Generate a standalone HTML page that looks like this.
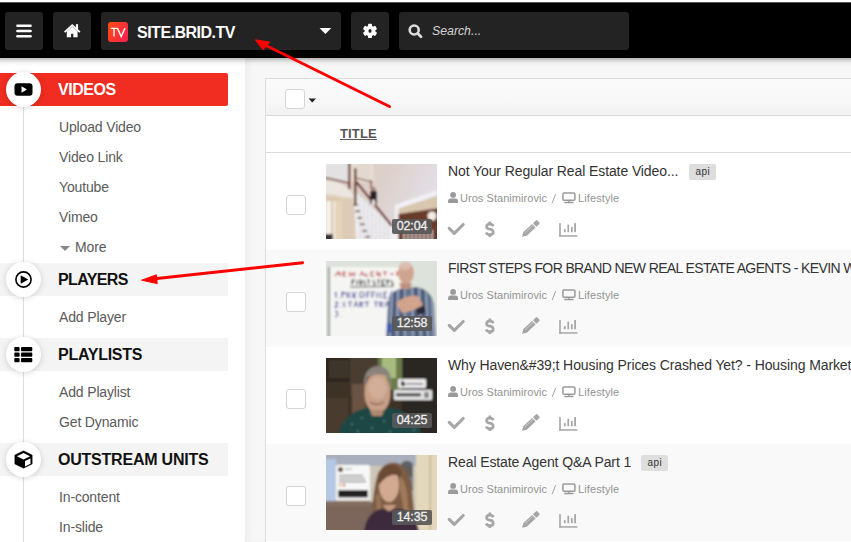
<!DOCTYPE html>
<html><head><meta charset="utf-8">
<style>
*{box-sizing:border-box;margin:0;padding:0}
html,body{width:851px;height:542px;overflow:hidden;background:#fff;font-family:"Liberation Sans",sans-serif}
#hdr{position:absolute;left:-10px;top:2px;width:871px;height:56px;background:#000;z-index:2;box-shadow:0 1px 6px rgba(0,0,0,.42)}
#hdrtop{position:absolute;left:0;top:2px;width:851px;height:1px;background:rgba(255,255,255,.35);z-index:3}
.btn{z-index:3}
#hicons,#htxt1,#htxt2{z-index:3}
.btn{position:absolute;top:12px;height:38px;background:#232323;border-radius:3px}
#side{position:absolute;left:0;top:58px;width:245px;height:484px;background:#fff;overflow:hidden}
#main{position:absolute;left:245px;top:58px;width:606px;height:484px;background:#f7f7f7;overflow:hidden}
.vline{position:absolute;left:23px;width:1px;background:#dedede}
.sec{position:absolute;left:0;width:228px;height:33px;background:#f4f4f4}
.sec .t{position:absolute;left:58px;top:0;line-height:33px;font-weight:bold;font-size:16px;color:#111;white-space:nowrap}
.circ{position:absolute;left:6px;width:35px;height:35px;border-radius:50%;background:#fff;box-shadow:0 1px 6px rgba(0,0,0,.16)}
.circ svg{position:absolute;left:0;top:0}
.sub{position:absolute;left:59px;margin-top:1px;font-size:14px;letter-spacing:-0.15px;color:#5a5a5a;line-height:16px;white-space:nowrap}
#panel{position:absolute;left:20px;top:20px;width:620px;height:480px;border:1px solid #dcdcdc;background:#fff}
.row{position:absolute;left:0;width:620px;height:97px;background:#fff}
.row.g{background:#f9f9f9}
.cb{position:absolute;width:20px;height:20px;border:1px solid #d4d4d4;border-radius:3px;background:#fff}
.thumb{position:absolute;left:60px;top:11px;width:111px;height:75px;overflow:hidden}
.thumb svg{display:block}
.dur{position:absolute;left:66px;top:54.5px;width:40px;height:15.5px;background:rgba(88,88,88,.92);color:#eee;font-size:12.5px;-webkit-text-stroke:0.3px #eee;letter-spacing:-0.2px;text-align:center;line-height:15.5px;border-radius:2px}
.title{position:absolute;left:182px;top:10px;font-size:14px;letter-spacing:-0.1px;color:#333;white-space:nowrap;line-height:16px}
.api{position:absolute;top:11px;width:26.8px;height:15.5px;background:#dedede;color:#333;font-size:10px;text-align:center;line-height:15.5px;border-radius:2px;letter-spacing:0.5px;text-indent:0.5px}
.meta{position:absolute;top:39px;font-size:11px;color:#939393;white-space:nowrap;line-height:13px}
.acts{position:absolute;left:0;top:0}
</style></head><body>
<div id="hdr"></div><div id="hdrtop"></div><div style="position:absolute;left:0;top:0;width:851px;height:2px;background:#fff;z-index:4"></div>
<div class="btn" style="left:5px;width:38px"></div>
<div class="btn" style="left:53px;width:38px"></div>
<div class="btn" style="left:101px;width:240px"></div>
<div class="btn" style="left:351px;width:38px"></div>
<div class="btn" style="left:399px;width:230px"></div>
<!-- header icons -->
<svg id="hicons" style="position:absolute;left:0;top:0" width="851" height="58">
  <g stroke="#fff" stroke-width="2.6" stroke-linecap="round">
    <line x1="17.5" y1="25.8" x2="30.5" y2="25.8"/>
    <line x1="17.5" y1="31" x2="30.5" y2="31"/>
    <line x1="17.5" y1="36.2" x2="30.5" y2="36.2"/>
  </g>
  <!-- home -->
  <path d="M64 31.5 L72.2 24 L80.5 31.5 L79.3 32.8 L72.2 26.5 L65.2 32.8 Z" fill="#fff"/>
  <path d="M66.8 31.3 L72.2 26.8 L77.6 31.3 L77.6 37.3 L73.3 37.3 L73.3 33.8 L71.1 33.8 L71.1 37.3 L66.8 37.3 Z" fill="#fff"/>
  <rect x="75.9" y="24.2" width="2.2" height="5" fill="#fff"/>
  <!-- TV logo -->
  <defs><linearGradient id="tvg" x1="0" y1="0.2" x2="1" y2="0.8"><stop offset="0" stop-color="#ff4a12"/><stop offset="1" stop-color="#fa2050"/></linearGradient></defs>
  <rect x="108" y="22" width="20" height="20" rx="3" fill="url(#tvg)"/>
  <path d="M110.7 28.4 H117.4 M114.05 28.4 V36.6 M117.4 28.1 L121.2 36.5 L125 28.1" stroke="#fff" stroke-width="1.4" fill="none"/>
  <!-- caret -->
  <path d="M319.5 28 L331.3 28 L325.4 34 Z" fill="#fff"/>
  <!-- gear -->
  <g transform="translate(370,30.9)" fill="#fff">
    <circle r="5.4"/>
    <rect x="-2" y="-7.1" width="4" height="3.5" rx="0.8"/>
    <rect x="-2" y="-7.1" width="4" height="3.5" rx="0.8" transform="rotate(60)"/>
    <rect x="-2" y="-7.1" width="4" height="3.5" rx="0.8" transform="rotate(120)"/>
    <rect x="-2" y="-7.1" width="4" height="3.5" rx="0.8" transform="rotate(180)"/>
    <rect x="-2" y="-7.1" width="4" height="3.5" rx="0.8" transform="rotate(240)"/>
    <rect x="-2" y="-7.1" width="4" height="3.5" rx="0.8" transform="rotate(300)"/>
    <ellipse rx="1.6" ry="1.9" fill="#232323"/>
  </g>
  <!-- search icon -->
  <circle cx="414.2" cy="30" r="4.5" stroke="#ddd" stroke-width="2.6" fill="none"/>
  <line x1="417.8" y1="33.6" x2="421" y2="36.8" stroke="#ddd" stroke-width="2.8" stroke-linecap="round"/>
</svg>
<div id="htxt1" style="position:absolute;left:137px;top:23px;font-size:16px;font-weight:bold;letter-spacing:-0.5px;color:#fff;line-height:19px">SITE.BRID.TV</div>
<div id="htxt2" style="position:absolute;left:432px;top:24px;font-size:12.3px;font-style:italic;color:#d4d4d4;line-height:15px">Search...</div>

<div id="side">
  
  <div class="vline" style="top:40px;height:444px"></div>
  <div style="position:absolute;left:0;top:15px;width:228px;height:33px;background:#f02d20;border-radius:0 2px 2px 0"></div>
  <div style="position:absolute;left:58px;top:15px;line-height:33px;font-weight:bold;font-size:16px;letter-spacing:-0.45px;color:#fff">VIDEOS</div>
  <div class="circ" style="top:13.5px">
    <svg width="35" height="35"><rect x="8.5" y="11.2" width="18" height="12.5" rx="3" fill="#000"/><path d="M15.5 14.2 L21 17.45 L15.5 20.7 Z" fill="#fff"/></svg>
  </div>
  <div class="sub" style="top:60px">Upload Video</div>
  <div class="sub" style="top:90px">Video Link</div>
  <div class="sub" style="top:120px">Youtube</div>
  <div class="sub" style="top:150px">Vimeo</div>
  <svg style="position:absolute;left:59px;top:187px" width="12" height="8"><path d="M1 1 L11 1 L6 6 Z" fill="#888"/></svg>
  <div class="sub" style="top:180px;left:75px">More</div>

  <div class="sec" style="top:205px"><div class="t" style="letter-spacing:-0.62px">PLAYERS</div></div>
  <div class="circ" style="top:203.5px">
    <svg width="35" height="35"><circle cx="17.5" cy="17.5" r="7.6" stroke="#000" stroke-width="1.6" fill="none"/><path d="M14.7 13.3 L22.2 17.5 L14.7 21.7 Z" fill="#000"/></svg>
  </div>
  <div class="sub" style="top:250px">Add Player</div>

  <div class="sec" style="top:280px"><div class="t" style="letter-spacing:-0.26px">PLAYLISTS</div></div>
  <div class="circ" style="top:278.5px">
    <svg width="35" height="35"><g fill="#000"><rect x="8.3" y="10" width="5.3" height="4.2" rx="0.9"/><rect x="15" y="10" width="11.3" height="4.2" rx="0.9"/><rect x="8.3" y="15.5" width="5.3" height="4.2" rx="0.9"/><rect x="15" y="15.5" width="11.3" height="4.2" rx="0.9"/><rect x="8.3" y="21" width="5.3" height="4.2" rx="0.9"/><rect x="15" y="21" width="11.3" height="4.2" rx="0.9"/></g></svg>
  </div>
  <div class="sub" style="top:325px">Add Playlist</div>
  <div class="sub" style="top:355px">Get Dynamic</div>

  <div class="sec" style="top:385px"><div class="t" style="letter-spacing:-0.22px">OUTSTREAM UNITS</div></div>
  <div class="circ" style="top:383.5px">
    <svg width="35" height="35"><path d="M17.5 8.8 L26.2 13.1 V22 L17.5 26.3 L8.8 22 V13.1 Z" fill="#000" stroke="#000" stroke-width="0.4" stroke-linejoin="round"/><path d="M17.5 10.9 L24.1 14.2 L17.5 17.5 L10.9 14.2 Z" fill="#fff"/><path d="M19 19.1 L24.5 16.4 V21.8 L19 24.4 Z" fill="#fff"/></svg>
  </div>
  <div class="sub" style="top:430px">In-content</div>
  <div class="sub" style="top:460px">In-slide</div>
</div>

<div id="main">
  <div style="position:absolute;left:0;top:0;width:606px;height:484px;box-shadow:inset 5px 0 9px -3px rgba(0,0,0,.055)"></div>
  <div id="panel">
    <div style="position:absolute;left:0;top:0;width:620px;height:37px;background:linear-gradient(#fafafa,#f8f8f8 65%,#f1f1f1);border-bottom:1px solid #d8d8d8"></div>
    <div class="cb" style="left:19px;top:10px"></div>
    <svg style="position:absolute;left:42px;top:19px" width="9" height="6"><path d="M0.5 0.5 L8 0.5 L4.25 4.6 Z" fill="#222"/></svg>
    <div style="position:absolute;left:0;top:37px;width:620px;height:37px;border-bottom:1px solid #dcdcdc"></div>
    <div style="position:absolute;left:74px;top:46.5px;font-size:13px;font-weight:bold;letter-spacing:0.15px;color:#555;text-decoration:underline;line-height:16px">TITLE</div>

<div class="row" style="top:74px">
  <div class="cb" style="left:20px;top:42px"></div>
  <div class="thumb"><svg width="111" height="75" viewBox="0 0 111 75">
 <defs><filter id="bl1" x="-5%" y="-5%" width="110%" height="110%"><feGaussianBlur stdDeviation="1"/></filter>
 <linearGradient id="w1" x1="0" x2="1" y1="0" y2="0.3"><stop offset="0" stop-color="#dccbbd"/><stop offset="0.55" stop-color="#ddd0cc"/><stop offset="1" stop-color="#e2dfe6"/></linearGradient></defs>
 <g filter="url(#bl1)">
 <rect x="-2" y="-2" width="115" height="79" fill="url(#w1)"/>
 <rect x="24" y="-2" width="24" height="20" fill="#e6ddd2"/>
 <path d="M-2 -2 H23 V19 L-2 14 Z" fill="#ecebec"/>
 <g stroke="#c4bebe" stroke-width="0.7"><path d="M2 0V14 M5 0V15 M8 0V15 M11 0V16 M14 0V17 M17 0V17 M20 0V18"/></g>
 <g stroke="#d0c8c4" stroke-width="0.6"><path d="M33 0V15 M36 0V15 M39 0V16 M42 0V17"/></g>
 <path d="M-2 13.5 L23 19" stroke="#6e4038" stroke-width="1.3"/>
 <path d="M30 14 L46 18" stroke="#6e4038" stroke-width="1.1"/>
 <path d="M-2 16 Q14 17 22 24 L28 32 V77 H-2 Z" fill="#ebe6e0"/>
 <path d="M-2 30 Q10 30 20 34 V77 H-2 Z" fill="#e0d2be"/>
 <rect x="-1" y="34" width="18" height="43" fill="#dcc8aa"/>
 <rect x="0" y="37" width="5" height="40" fill="#f5f2ec"/>
 <rect x="7" y="37" width="3" height="40" fill="#eee6d8"/>
 <rect x="11" y="37" width="5" height="40" fill="#e4d4ba"/>
 <path d="M18 33 L27 34 L30 77 H18 Z" fill="#dccbb6"/>
 <path d="M28 26 L67 63 L70 77 L30 77 Z" fill="#eeedf0"/>
 <g stroke="#cfcbd0" stroke-width="0.8"><path d="M34 30V77 M38 34V77 M42 38V77 M46 42V77 M50 46V77 M54 50V77 M58 54V77 M62 58V77"/></g>
 <g fill="#5a3328"><rect x="27.5" y="40" width="4.5" height="1.6"/><rect x="29.5" y="46.5" width="4.5" height="1.6"/><rect x="31.5" y="53" width="4.5" height="1.6"/><rect x="34" y="59.5" width="4.5" height="1.6"/><rect x="36.5" y="66" width="4.5" height="1.6"/><rect x="39.5" y="72" width="4.5" height="1.6"/></g>
 <path d="M30.5 18 L66 62" stroke="#6a3024" stroke-width="2.2"/>
 <rect x="22" y="-2" width="2.4" height="27" fill="#6a3428"/>
 <rect x="28" y="4" width="2.5" height="37" fill="#6e3a2c"/>
 <rect x="44.5" y="16" width="1.4" height="9" fill="#6e3a2c"/>
 <path d="M44 40 L44 28 Q47 22 51 28 L51 40 Z" fill="#2c2426"/>
 <circle cx="47.5" cy="25" r="2.2" fill="#b08870"/>
 <rect x="46" y="36" width="3" height="5" fill="#e8e4e4"/>
 <path d="M69 41 L111 26 V77 H69 Z" fill="#f0f0f5"/>
 <path d="M72.5 44.5 L113 31 V77 H72.5 Z" fill="#d8c6ae"/>
 <path d="M72.5 50 L113 44 V77 H72.5 Z" fill="#6a3a2c"/>
 <circle cx="106" cy="52" r="4.5" fill="#f2ece4"/>
 <g stroke="#f0eef2" stroke-width="1.3"><path d="M78 66V77 M82 66V77 M86 66V77 M90 66V77 M94 66V77 M98 66V77 M102 66V77 M106 66V77"/></g>
 <rect x="-2" y="70" width="9" height="7" fill="#3a3030"/>
 </g>
</svg>
<div class="dur">02:04</div></div>
  <div class="title" style="">Not Your Regular Real Estate Video...</div>
  <div class="api" style="left:423.2px">api</div>
  <div class="meta" style="left:194px;letter-spacing:0.05px">Uros Stanimirovic</div>
  <div class="meta" style="left:312px;letter-spacing:0.1px">Lifestyle</div>
  <svg class="acts" width="330" height="97"><g fill="#9a9a9a">
 <circle cx="187.1" cy="41.9" r="2.9"/>
 <path d="M182.1 50.1 V48.2 Q182.1 45.6 184.6 45.6 L189.5 45.6 Q192 45.6 192 48.2 V50.1 Z"/>
 </g>
 <g fill="none" stroke="#9a9a9a">
 <rect x="296.9" y="39.9" width="12" height="7.4" rx="1" stroke-width="1.5"/>
 </g>
 <rect x="302.2" y="47.5" width="1.4" height="1.6" fill="#9a9a9a"/>
 <rect x="298.2" y="48.8" width="9.4" height="1.5" rx="0.5" fill="#9a9a9a"/>
 <path d="M286.2 50 L289.6 41.1" stroke="#9a9a9a" stroke-width="0.9"/>
<path d="M183.2 75.3 L188.3 80.4 L197.2 71.5" fill="none" stroke="#a6a6a6" stroke-width="3.1" stroke-linecap="round" stroke-linejoin="round"/>
 <g fill="none" stroke="#a6a6a6" stroke-width="2.7" stroke-linecap="butt">
 <path d="M227.4 73.2 Q226.4 71.1 223.8 71.1 Q220.6 71.1 220.6 73.7 Q220.6 75.7 223.8 76.2 Q227.2 76.7 227.2 79.2 Q227.2 81.7 223.8 81.7 Q221 81.7 220.1 79.5"/>
 <path d="M223.85 68.6 V71 M223.85 81.8 V84"/>
 </g>
 <g transform="translate(264.2,76.15) rotate(-43)" fill="#a6a6a6">
  <rect x="6" y="-2.5" width="5.2" height="5" rx="1.1"/>
  <path d="M-7 -2.5 L5 -2.5 L5 2.5 L-7 2.5 L-11.2 0 Z"/>
  <path d="M-6.5 -0.9 L4.5 -0.9" stroke="#fff" stroke-opacity="0.6" stroke-width="0.6"/>
 </g>
 <g fill="#a6a6a6">
  <rect x="293.2" y="70.1" width="1.6" height="13.6"/>
  <rect x="293.2" y="82.2" width="18.2" height="1.5"/>
  <rect x="297.9" y="76.2" width="1.8" height="3"/>
  <rect x="301.4" y="71.6" width="1.7" height="7.6"/>
  <rect x="305" y="74.1" width="1.7" height="5.1"/>
  <rect x="308.2" y="70.1" width="1.8" height="9.1"/>
 </g>
</svg>
</div>
<div class="row g" style="top:171px">
  <div class="cb" style="left:20px;top:42px"></div>
  <div class="thumb"><svg width="111" height="75" viewBox="0 0 111 75">
 <defs><filter id="bl2" x="-5%" y="-5%" width="110%" height="110%"><feGaussianBlur stdDeviation="1"/></filter></defs>
 <g filter="url(#bl2)">
 <rect x="-2" y="-2" width="115" height="79" fill="#dde3db"/>
 <rect x="3" y="6" width="72" height="71" fill="#f5f5f3"/>
 <rect x="2.5" y="6" width="1.2" height="71" fill="#666"/>
 <g fill="none" stroke="#c46060" stroke-width="1.25"><path d="M9 15 L12 11 L14 15 L14 11 M17 15 L17 11 L20 11 M17 13 L19 13 M17 15 L20 15 M23 11 L24 15 L26 12 L28 15 L29 11 M34 15 L36 11 L38 15 M40 12 Q38 15 41 15 L42 14 M45 15V11 L48 11 M45 15 L48 15 M51 15 V11 L54 15 V11 M57 11 H61 M59 11 V15 M64 13 H68 M71 15 V11 L73 12 L71 13"/></g>
 <g fill="none" stroke="#555" stroke-width="1.25"><path d="M26 19 V24 M26 19 H29 M26 21 H28 M31 19 V24 M34 24 V19 L36 21 L34 22 L36 24 M38 19 Q37 21 39 22 Q40 24 38 24 M41 19 H44 M42.5 19 V24 M48 19 Q46 21 49 22 Q50 24 47 24 M51 19 H54 M52.5 19 V24 M56 19 V24 H59 M56 19 H59 M56 21.5 H58 M61 24 V19 L63 20 L61 22 M66 19 Q64 21 67 22 Q68 24 65 24 M24 26 L68 25.5"/></g>
 <g fill="none" stroke="#6868a8" stroke-width="1.25"><path d="M9 33 L10 31 V37 M13 37 H13.5 M16 37 V31 L19 32 L16 34 M21 31 V37 M24 31 Q22 34 24 37 M27 31 V37 L30 31 M27 34 L30 37 M34 34 Q33 31 36 31 Q39 32 38 35 Q36 37 34 36 Z M41 37 V31 H44 M41 34 H43 M46 37 V31 H49 M46 34 H48 M51 31 V37 M55 31 Q53 34 55 37 M58 31 V37 H61 M58 31 H61 M58 34 H60 M63 38 L66 30 M68 37 V31 L71 32 L68 34 L71 37"/></g>
 <g fill="none" stroke="#6868a8" stroke-width="1.25"><path d="M9 42 Q11 40 12 42 L9 46 H12 M14 46 H14.5 M19 41 Q16 42 18 43.5 Q20 45 17 46 M22 41 H26 M24 41 V46 M28 46 L30 41 L32 46 M34 46 V41 L37 42 L34 43 L37 46 M39 41 H43 M41 41 V46 M48 41 H52 M50 41 V46 M54 46 V41 L57 42 L54 43 L57 46 M59 46 L61 41 L63 46 M66 41 V46 M69 46 V41 L72 46 V41"/></g>
 <path d="M9 50 Q12 50 11 52 Q13 54 9 56 M14 56 H14.5" fill="none" stroke="#6868a8" stroke-width="1.25"/>
 <path d="M60 77 L62 42 Q64 30 76 27 L90 26 Q104 28 108 42 L110 77 Z" fill="#60708c"/>
 <g stroke="#a8b4c8" stroke-width="1.3"><path d="M66 34 L64 77 M72 28 L71 77 M79 26 L79 77 M86 26 L87 77 M93 27 L95 77 M100 30 L102 77 M106 36 L108 77"/></g>
 <g stroke="#3a3e60" stroke-width="1.25"><path d="M69 30 L67 77 M76 27 L75 77 M90 26 L91 77 M97 28 L99 77"/></g>
 <path d="M73 22 L86 22 L84 28 L75 28 Z" fill="#c09080"/>
 <ellipse cx="80" cy="12" rx="8" ry="11" fill="#cfa48e"/>
 <ellipse cx="79" cy="5" rx="6" ry="4" fill="#dcbcae"/>
 <path d="M70 42 Q80 33 92 35 L97 44 Q88 50 76 52 Z" fill="#d2a48c"/>
 <path d="M90 48 L98 44 L100 52 L92 54 Z" fill="#2a2a3a"/>
 <rect x="61" y="62" width="4" height="10" fill="#3a58b0"/>
 </g>
</svg>
<div class="dur">12:58</div></div>
  <div class="title" style="letter-spacing:-0.62px">FIRST STEPS FOR BRAND NEW REAL ESTATE AGENTS - KEVIN WARD</div>
  <div class="meta" style="left:194px;letter-spacing:0.05px">Uros Stanimirovic</div>
  <div class="meta" style="left:312px;letter-spacing:0.1px">Lifestyle</div>
  <svg class="acts" width="330" height="97"><g fill="#9a9a9a">
 <circle cx="187.1" cy="41.9" r="2.9"/>
 <path d="M182.1 50.1 V48.2 Q182.1 45.6 184.6 45.6 L189.5 45.6 Q192 45.6 192 48.2 V50.1 Z"/>
 </g>
 <g fill="none" stroke="#9a9a9a">
 <rect x="296.9" y="39.9" width="12" height="7.4" rx="1" stroke-width="1.5"/>
 </g>
 <rect x="302.2" y="47.5" width="1.4" height="1.6" fill="#9a9a9a"/>
 <rect x="298.2" y="48.8" width="9.4" height="1.5" rx="0.5" fill="#9a9a9a"/>
 <path d="M286.2 50 L289.6 41.1" stroke="#9a9a9a" stroke-width="0.9"/>
<path d="M183.2 75.3 L188.3 80.4 L197.2 71.5" fill="none" stroke="#a6a6a6" stroke-width="3.1" stroke-linecap="round" stroke-linejoin="round"/>
 <g fill="none" stroke="#a6a6a6" stroke-width="2.7" stroke-linecap="butt">
 <path d="M227.4 73.2 Q226.4 71.1 223.8 71.1 Q220.6 71.1 220.6 73.7 Q220.6 75.7 223.8 76.2 Q227.2 76.7 227.2 79.2 Q227.2 81.7 223.8 81.7 Q221 81.7 220.1 79.5"/>
 <path d="M223.85 68.6 V71 M223.85 81.8 V84"/>
 </g>
 <g transform="translate(264.2,76.15) rotate(-43)" fill="#a6a6a6">
  <rect x="6" y="-2.5" width="5.2" height="5" rx="1.1"/>
  <path d="M-7 -2.5 L5 -2.5 L5 2.5 L-7 2.5 L-11.2 0 Z"/>
  <path d="M-6.5 -0.9 L4.5 -0.9" stroke="#fff" stroke-opacity="0.6" stroke-width="0.6"/>
 </g>
 <g fill="#a6a6a6">
  <rect x="293.2" y="70.1" width="1.6" height="13.6"/>
  <rect x="293.2" y="82.2" width="18.2" height="1.5"/>
  <rect x="297.9" y="76.2" width="1.8" height="3"/>
  <rect x="301.4" y="71.6" width="1.7" height="7.6"/>
  <rect x="305" y="74.1" width="1.7" height="5.1"/>
  <rect x="308.2" y="70.1" width="1.8" height="9.1"/>
 </g>
</svg>
</div>
<div class="row" style="top:268px">
  <div class="cb" style="left:20px;top:42px"></div>
  <div class="thumb"><svg width="111" height="75" viewBox="0 0 111 75">
 <defs><filter id="bl3" x="-5%" y="-5%" width="110%" height="110%"><feGaussianBlur stdDeviation="1"/></filter></defs>
 <g filter="url(#bl3)">
 <rect x="-2" y="-2" width="115" height="79" fill="#3c3027"/>
 <rect x="-2" y="-2" width="30" height="26" fill="#2e261f"/>
 <rect x="3" y="2" width="20" height="18" fill="#3e342a"/>
 <rect x="24" y="-2" width="28" height="40" fill="#4a3c30"/>
 <rect x="26" y="26" width="14" height="34" fill="#6a5242"/>
 <rect x="52" y="-2" width="24" height="34" fill="#6a7a48"/>
 <rect x="56" y="-2" width="14" height="22" fill="#a8bc80"/>
 <rect x="76" y="-2" width="37" height="79" fill="#2a2520"/>
 <rect x="-2" y="40" width="24" height="37" fill="#4a3a2e"/>
 <path d="M12 77 Q16 56 40 50 L66 50 Q88 54 96 77 Z" fill="#1d4644"/>
 <g fill="#86aaa8"><circle cx="26" cy="66" r="0.8"/><circle cx="36" cy="60" r="0.8"/><circle cx="46" cy="70" r="0.8"/><circle cx="58" cy="63" r="0.8"/><circle cx="70" cy="68" r="0.8"/><circle cx="80" cy="62" r="0.8"/><circle cx="88" cy="72" r="0.8"/><circle cx="32" cy="73" r="0.8"/><circle cx="64" cy="74" r="0.8"/></g>
 <ellipse cx="51.5" cy="35" rx="13" ry="20" fill="#c8a088"/>
 <ellipse cx="51.5" cy="30" rx="9" ry="11" fill="#d2ae98"/>
 <path d="M38 32 Q36 9 52 8 Q67 9 65 30 Q63 19 58 17 Q50 15 42 19 Q39 24 38 32 Z" fill="#8a827c"/>
 <path d="M44 44 Q51 49 58 44" stroke="#8a5a48" stroke-width="1.4" fill="none"/>
 <path d="M44 52 L58 52 L56 58 L46 58 Z" fill="#b08870"/>
 <rect x="72" y="21" width="28" height="9" rx="1" fill="#ebebeb"/>
 <path d="M75 28 V24 L77 22 V24 H79 V28 Z" fill="#222"/>
 <rect x="80" y="25" width="17" height="1.5" fill="#777"/>
 <rect x="68" y="32" width="38" height="10" rx="1" fill="#e6e6e6"/>
 <rect x="70" y="35" width="25" height="3.5" fill="#555"/>
 <rect x="98" y="34" width="5" height="6" fill="#888"/>
 </g>
</svg>
<div class="dur">04:25</div></div>
  <div class="title" style="">Why Haven&amp;#39;t Housing Prices Crashed Yet? - Housing Market</div>
  <div class="meta" style="left:194px;letter-spacing:0.05px">Uros Stanimirovic</div>
  <div class="meta" style="left:312px;letter-spacing:0.1px">Lifestyle</div>
  <svg class="acts" width="330" height="97"><g fill="#9a9a9a">
 <circle cx="187.1" cy="41.9" r="2.9"/>
 <path d="M182.1 50.1 V48.2 Q182.1 45.6 184.6 45.6 L189.5 45.6 Q192 45.6 192 48.2 V50.1 Z"/>
 </g>
 <g fill="none" stroke="#9a9a9a">
 <rect x="296.9" y="39.9" width="12" height="7.4" rx="1" stroke-width="1.5"/>
 </g>
 <rect x="302.2" y="47.5" width="1.4" height="1.6" fill="#9a9a9a"/>
 <rect x="298.2" y="48.8" width="9.4" height="1.5" rx="0.5" fill="#9a9a9a"/>
 <path d="M286.2 50 L289.6 41.1" stroke="#9a9a9a" stroke-width="0.9"/>
<path d="M183.2 75.3 L188.3 80.4 L197.2 71.5" fill="none" stroke="#a6a6a6" stroke-width="3.1" stroke-linecap="round" stroke-linejoin="round"/>
 <g fill="none" stroke="#a6a6a6" stroke-width="2.7" stroke-linecap="butt">
 <path d="M227.4 73.2 Q226.4 71.1 223.8 71.1 Q220.6 71.1 220.6 73.7 Q220.6 75.7 223.8 76.2 Q227.2 76.7 227.2 79.2 Q227.2 81.7 223.8 81.7 Q221 81.7 220.1 79.5"/>
 <path d="M223.85 68.6 V71 M223.85 81.8 V84"/>
 </g>
 <g transform="translate(264.2,76.15) rotate(-43)" fill="#a6a6a6">
  <rect x="6" y="-2.5" width="5.2" height="5" rx="1.1"/>
  <path d="M-7 -2.5 L5 -2.5 L5 2.5 L-7 2.5 L-11.2 0 Z"/>
  <path d="M-6.5 -0.9 L4.5 -0.9" stroke="#fff" stroke-opacity="0.6" stroke-width="0.6"/>
 </g>
 <g fill="#a6a6a6">
  <rect x="293.2" y="70.1" width="1.6" height="13.6"/>
  <rect x="293.2" y="82.2" width="18.2" height="1.5"/>
  <rect x="297.9" y="76.2" width="1.8" height="3"/>
  <rect x="301.4" y="71.6" width="1.7" height="7.6"/>
  <rect x="305" y="74.1" width="1.7" height="5.1"/>
  <rect x="308.2" y="70.1" width="1.8" height="9.1"/>
 </g>
</svg>
</div>
<div class="row g" style="top:365px">
  <div class="cb" style="left:20px;top:42px"></div>
  <div class="thumb"><svg width="111" height="75" viewBox="0 0 111 75">
 <defs><filter id="bl4" x="-5%" y="-5%" width="110%" height="110%"><feGaussianBlur stdDeviation="1"/></filter></defs>
 <g filter="url(#bl4)">
 <rect x="-2" y="-2" width="115" height="79" fill="#cec6b6"/>
 <rect x="-2" y="-2" width="95" height="13" fill="#a9afbc"/>
 <rect x="-2" y="4" width="12" height="44" fill="#b4c8e4"/>
 <rect x="75" y="6" width="12" height="33" rx="5" fill="#5c6062"/>
 <rect x="77" y="22" width="9" height="15" fill="#7e98ac"/>
 <rect x="90" y="-2" width="23" height="79" fill="#e4d8bc"/>
 <rect x="103.5" y="-2" width="1.5" height="79" fill="#c4b48e"/>
 <rect x="-2" y="47" width="60" height="30" fill="#7c665c"/>
 <rect x="-2" y="46" width="46" height="5" fill="#846e62"/>
 <rect x="10" y="10" width="34" height="35" rx="1.5" fill="#f8f8f8"/>
 <circle cx="14.5" cy="14.5" r="2.6" fill="#6e4e40"/>
 <rect x="19" y="13.5" width="7" height="1.2" fill="#aaa"/>
 <g fill="#555"><rect x="13" y="20" width="24" height="1.1"/><rect x="13" y="23" width="26" height="1.1"/><rect x="13" y="26" width="27" height="1.1"/></g>
 <circle cx="14" cy="30" r="1.3" fill="#e0a040"/><circle cx="18" cy="30" r="1.3" fill="#d02a40"/>
 <rect x="12" y="35" width="30" height="7.5" rx="1" fill="#242424"/>
 <path d="M46 77 Q45 40 52 18 Q58 7 68 7.5 Q82 9 85 26 Q88 52 90 77 Z" fill="#7c5c44"/>
 <path d="M74 20 Q82 30 82 50 L86 74 L78 74 Q78 50 74 36 Z" fill="#a07a5a"/>
 <path d="M50 40 Q52 60 48 74 L54 74 Q56 56 54 40 Z" fill="#9a7656"/>
 <ellipse cx="63" cy="30" rx="10" ry="17" fill="#d2aa92"/>
 <path d="M52 24 Q56 8 68 10 Q76 12 75 22 Q64 15 53 30 Z" fill="#6a4a36"/>
 <path d="M38 77 Q40 58 54 54 L76 54 Q90 58 93 77 Z" fill="#3c2a3c"/>
 <path d="M57 50 Q63 62 70 50 Z" fill="#c49a80"/>
 </g>
</svg>
<div class="dur">14:35</div></div>
  <div class="title" style="">Real Estate Agent Q&amp;A Part 1</div>
  <div class="api" style="left:375.2px">api</div>
  <div class="meta" style="left:194px;letter-spacing:0.05px">Uros Stanimirovic</div>
  <div class="meta" style="left:312px;letter-spacing:0.1px">Lifestyle</div>
  <svg class="acts" width="330" height="97"><g fill="#9a9a9a">
 <circle cx="187.1" cy="41.9" r="2.9"/>
 <path d="M182.1 50.1 V48.2 Q182.1 45.6 184.6 45.6 L189.5 45.6 Q192 45.6 192 48.2 V50.1 Z"/>
 </g>
 <g fill="none" stroke="#9a9a9a">
 <rect x="296.9" y="39.9" width="12" height="7.4" rx="1" stroke-width="1.5"/>
 </g>
 <rect x="302.2" y="47.5" width="1.4" height="1.6" fill="#9a9a9a"/>
 <rect x="298.2" y="48.8" width="9.4" height="1.5" rx="0.5" fill="#9a9a9a"/>
 <path d="M286.2 50 L289.6 41.1" stroke="#9a9a9a" stroke-width="0.9"/>
<path d="M183.2 75.3 L188.3 80.4 L197.2 71.5" fill="none" stroke="#a6a6a6" stroke-width="3.1" stroke-linecap="round" stroke-linejoin="round"/>
 <g fill="none" stroke="#a6a6a6" stroke-width="2.7" stroke-linecap="butt">
 <path d="M227.4 73.2 Q226.4 71.1 223.8 71.1 Q220.6 71.1 220.6 73.7 Q220.6 75.7 223.8 76.2 Q227.2 76.7 227.2 79.2 Q227.2 81.7 223.8 81.7 Q221 81.7 220.1 79.5"/>
 <path d="M223.85 68.6 V71 M223.85 81.8 V84"/>
 </g>
 <g transform="translate(264.2,76.15) rotate(-43)" fill="#a6a6a6">
  <rect x="6" y="-2.5" width="5.2" height="5" rx="1.1"/>
  <path d="M-7 -2.5 L5 -2.5 L5 2.5 L-7 2.5 L-11.2 0 Z"/>
  <path d="M-6.5 -0.9 L4.5 -0.9" stroke="#fff" stroke-opacity="0.6" stroke-width="0.6"/>
 </g>
 <g fill="#a6a6a6">
  <rect x="293.2" y="70.1" width="1.6" height="13.6"/>
  <rect x="293.2" y="82.2" width="18.2" height="1.5"/>
  <rect x="297.9" y="76.2" width="1.8" height="3"/>
  <rect x="301.4" y="71.6" width="1.7" height="7.6"/>
  <rect x="305" y="74.1" width="1.7" height="5.1"/>
  <rect x="308.2" y="70.1" width="1.8" height="9.1"/>
 </g>
</svg>
</div>

  </div>
</div>
<!-- arrows -->
<svg style="position:absolute;left:0;top:0;z-index:5" width="851" height="542">
  <g fill="#f00" stroke="#f00">
    <line x1="389.5" y1="106.5" x2="262" y2="43.5" stroke-width="3" stroke-linecap="round"/>
    <path d="M255.3 39.8 L269.6 42 L263 49.8 Z" stroke-width="1" stroke-linejoin="round"/>
    <line x1="302.5" y1="262.7" x2="150" y2="279.2" stroke-width="3" stroke-linecap="round"/>
    <path d="M141.6 280.2 L156.4 274.8 L157.2 283.6 Z" stroke-width="1" stroke-linejoin="round"/>
  </g>
</svg>
</body></html>
